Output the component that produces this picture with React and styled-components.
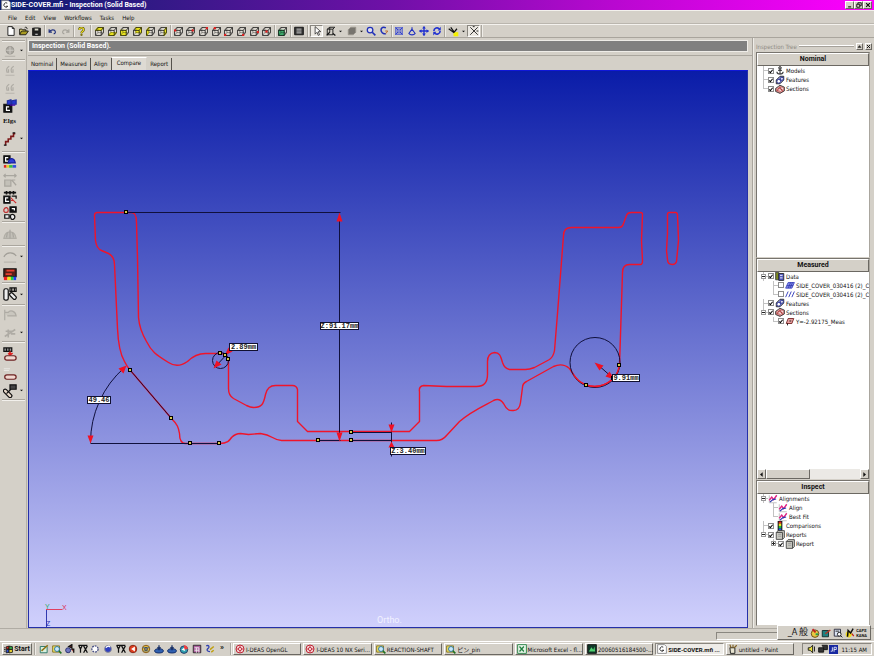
import React from "react";
import styled, { createGlobalStyle, css } from "styled-components";

const face = "#d4d0c8";
const shade = "#8a8780";
const ui = `"DejaVu Sans Condensed", Roboto, "Noto Sans CJK JP", sans-serif`;
const strong = `Roboto, "Liberation Sans", sans-serif`;

const Global = createGlobalStyle`
  *, *::before, *::after { box-sizing: border-box; }
  body { margin: 0; background: ${face}; color: #111; font-family: ${ui}; font-size: 6px; line-height: 9px; }
  button { font: inherit; color: inherit; background: none; border: 0; padding: 0; margin: 0; }
  h1, h2, ul, p { margin: 0; padding: 0; font-size: inherit; list-style: none; }
  svg { display: block; }
`;

const raised = css`
  border: 1px solid;
  border-color: #fff #6b6862 #6b6862 #fff;
`;
const sunken = css`
  border: 1px solid;
  border-color: ${shade} #fff #fff ${shade};
`;

/* ---------- frame ---------- */
const Window = styled.div`
  height: 100vh;
  min-height: 600px;
  display: flex;
  flex-direction: column;
  background: ${face};
`;
const TitleBar = styled.header`
  height: 10px;
  flex: none;
  display: flex;
  align-items: center;
  gap: 0;
  padding: 0 2px 0 1px;
  background: linear-gradient(90deg, #0a1f70, #7010a8 45%, #b808d0 70%, #ff00ff);
  color: #fff;
`;
const Title = styled.h1`
  flex: 1;
  font-family: ${strong};
  font-size: 7px;
  font-weight: 700;
  white-space: nowrap;
`;
const CaptionButton = styled.button`
  ${raised}
  width: 9px;
  height: 8px;
  background: ${face};
  display: grid;
  place-items: center;
`;
const MenuBar = styled.nav`
  flex: none;
  height: 14px;
  display: flex;
  align-items: center;
  gap: 8px;
  padding: 0 8px;
  border-top: 1px solid #f2f0ec;
  border-bottom: 1px solid #bab6ae;
`;
const ToolBar = styled.div`
  flex: none;
  height: 14px;
  display: flex;
  align-items: stretch;
  padding-left: 5px;
  border-top: 1px solid #f4f2ee;
  border-bottom: 1px solid #a9a59d;
`;
const Group = styled.div`
  width: ${(p) => p.$width}px;
  display: flex;
`;
const Tool = styled.button`
  flex: ${(p) => (p.$drop ? "none" : 1)};
  width: ${(p) => (p.$drop ? "21px" : "auto")};
  display: flex;
  align-items: center;
  justify-content: center;
  gap: 3px;
  ${(p) => p.$pressed && css`${sunken} background: #ece9e3;`}
`;
const Sep = styled.span`
  width: 3px;
  padding-left: 1px;
  &::before {
    content: "";
    display: block;
    height: 100%;
    width: 2px;
    border-left: 1px solid #aaa69e;
    border-right: 1px solid #efede8;
  }
`;
const Grip = styled(Sep)`
  width: 5px;
  padding-left: 2px;
`;
const Workspace = styled.div`
  flex: 1;
  min-height: 0;
  display: grid;
  grid-template-columns: 27px minmax(0, 1fr) 122px;
`;

/* ---------- left tools ---------- */
const SideBar = styled.aside`
  display: flex;
  flex-direction: column;
  padding: 2px 1px 0 2px;
  border-right: 1px solid #b4b0a8;
`;
const SideGroup = styled.div`
  border-top: 1px solid #aaa69e;
  box-shadow: inset 0 1px #f2f0ec;
  padding-top: 1px;
`;
const SideTool = styled.button`
  width: 100%;
  height: ${(p) => p.$h || 18}px;
  display: grid;
  grid-template-columns: 15px 1fr;
  align-items: center;
  justify-items: center;
`;

/* ---------- centre ---------- */
const Centre = styled.main`
  display: flex;
  flex-direction: column;
  min-width: 0;
  min-height: 0;
  padding: 2px 0 0 1px;
`;
const TaskHeader = styled.h2`
  flex: none;
  height: 12px;
  background: #808080;
  border: 1px solid #eeece8;
  color: #fff;
  font: 700 7px/10px ${strong};
  padding-left: 3px;
  margin-right: 4px;
`;
const TabStrip = styled.div`
  flex: none;
  height: 15px;
  margin-top: 3px;
  border-top: 1px solid #aaa69e;
  display: flex;
  align-items: flex-end;
`;
const Tab = styled.button`
  height: ${(p) => (p.$on ? 13 : 12)}px;
  padding: 0 3px 1px;
  min-width: 21px;
  white-space: nowrap;
  border-right: 1px solid ${(p) => (p.$on ? face : "#55524d")};
  ${(p) => p.$on && css`border-top: 1px solid #fff; background: #dedad3; padding: 0 5px 3px;`}
`;
const View = styled.section`
  flex: 1;
  min-height: 0;
  margin-right: 4px;
  display: flex;
  border: 1px solid #2530a8;
  border-top-color: #1018d8;
  background: linear-gradient(#0a1ca8, #d0d0fc);
`;
const Drawing = styled.svg`
  flex: 1;
  min-width: 0;
  min-height: 0;
  .cut { fill: none; stroke: #f0142a; stroke-width: 1.4; stroke-linejoin: round; }
  .dim { fill: none; stroke: #10103c; stroke-width: 1; }
  .tip { fill: #f01024; }
  .node { fill: #d8c850; stroke: #000; stroke-width: 1; }
  .plate { fill: #fff; stroke: #101030; stroke-width: 1; }
  .value { font: 700 7px "Liberation Mono", monospace; fill: #222; text-anchor: middle; }
  .axis { font: 7px "Liberation Sans", sans-serif; }
  .mode { font: 9px Roboto, sans-serif; fill: #f2f2ff; }
`;

/* ---------- right panel ---------- */
const Dock = styled.aside`
  border-left: 1px solid #a9a59d;
  box-shadow: inset 1px 0 #efede8;
  padding: 2px 2px 2px 3px;
  display: grid;
  grid-template-rows: 12px 205fr 222fr 145fr;
  min-height: 0;
  min-width: 0;
`;
const DockTitle = styled.div`
  display: flex;
  align-items: center;
  gap: 2px;
  color: #8f8b83;
  white-space: nowrap;
`;
const DockRule = styled.span`
  flex: 1;
  height: 2px;
  border-top: 1px solid #fff;
  border-bottom: 1px solid #a5a19a;
`;
const SmallButton = styled.button`
  ${raised}
  width: 7px;
  height: 7px;
  background: ${face};
  display: grid;
  place-items: center;
`;
const Pane = styled.section`
  min-height: 0;
  min-width: 0;
  display: flex;
  flex-direction: column;
  background: #fff;
  border: 1px solid;
  border-color: #77746e #aaa69e ${face} #77746e;
  margin: 0 2px 0 0;
`;
const PaneTitle = styled.h2`
  flex: none;
  height: 13px;
  font: 700 7px/11px ${strong};
  text-align: center;
  background: ${face};
  ${raised}
`;
const Tree = styled.ul`
  flex: 1;
  min-height: 0;
  overflow: hidden;
  padding-left: 1px;
`;
const Row = styled.li`
  height: 9px;
  display: flex;
  align-items: center;
  white-space: nowrap;
`;
const Branch = styled.span`
  flex: none;
  width: 10px;
  height: 9px;
  margin-left: ${(p) => (p.$child ? 10 : 0)}px;
  display: grid;
  place-items: center;
  background:
    linear-gradient(#c2c2c2, #c2c2c2) 5px 4px / 5px 1px no-repeat,
    linear-gradient(#c2c2c2, #c2c2c2) 5px 0 / 1px ${(p) => (p.$last ? 5 : 9)}px no-repeat;
`;
const Expander = styled.button`
  width: 5px;
  height: 5px;
  border: 1px solid #999;
  background:
    linear-gradient(#222, #222) center / 3px 1px no-repeat,
    linear-gradient(#222, #222) center / 1px ${(p) => (p.$plus ? 3 : 0)}px no-repeat,
    #fff;
`;
const RowLabel = styled.label`
  display: flex;
  align-items: center;
  gap: 1px;
`;
const Check = styled.input`
  appearance: none;
  flex: none;
  width: 6px;
  height: 6px;
  margin: 0;
  border: 1px solid #8c8c8c;
  background: #fff;
  display: grid;
  place-items: center;
  &:checked::before {
    content: "";
    width: 2px;
    height: 4px;
    border: solid #000;
    border-width: 0 1px 1px 0;
    transform: rotate(40deg);
  }
`;
const Scroller = styled.div`
  flex: none;
  height: 10px;
  display: flex;
  background: #ebe9e5;
`;
const ScrollButton = styled.button`
  ${raised}
  background: ${face};
  width: ${(p) => (p.$thumb ? "44px" : "9px")};
  display: grid;
  place-items: center;
`;
const Spacer = styled.span`
  flex: 1;
`;

/* ---------- bottom ---------- */
const StatusBar = styled.div`
  flex: none;
  height: 13px;
  position: relative;
  padding: 3px 6px 1px 0;
  border-top: 1px solid #b0aca4;
  display: flex;
  justify-content: flex-end;
`;
const StatusCell = styled.div`
  ${sunken}
  width: 152px;
`;
const LanguageBar = styled.div`
  position: absolute;
  right: 3px;
  bottom: 1px;
  height: 15px;
  width: 94px;
  padding: 0 3px;
  display: flex;
  align-items: center;
  justify-content: space-between;
  background: ${face};
  font-size: 9px;
  ${raised}
`;
const Caps = styled.span`
  font: 700 4px/5px ${strong};
`;
const TaskBar = styled.footer`
  flex: none;
  height: 15px;
  display: flex;
  align-items: stretch;
  padding: 1px 2px;
  border-top: 1px solid #fff;
`;
const StartButton = styled.button`
  ${raised}
  width: 30px;
  display: flex;
  align-items: center;
  justify-content: center;
  gap: 1px;
  font: 700 7px/9px ${strong};
`;
const Quick = styled.div`
  width: 178px;
  display: flex;
  margin-left: 1px;
`;
const More = styled.button`
  width: 12px;
  font: 700 8px/6px ${strong};
  padding-bottom: 5px;
`;
const Tasks = styled.div`
  flex: 1;
  min-width: 0;
  display: grid;
  grid-template-columns: repeat(8, minmax(0, 1fr));
  gap: 2px;
`;
const Task = styled.button`
  ${(p) => (p.$on ? sunken : raised)}
  background: ${(p) => (p.$on ? "#eeece8" : face)};
  ${(p) => p.$on && css`font: 700 6px/9px ${strong};`}
  display: flex;
  align-items: center;
  gap: 1px;
  padding: 0 1px;
  min-width: 0;
  white-space: nowrap;
  svg { flex: none; }
`;
const Tray = styled.div`
  ${sunken}
  width: 70px;
  margin-left: 8px;
  padding: 0 4px;
  display: flex;
  align-items: center;
  gap: 1px;
  white-space: nowrap;
  svg { flex: none; }
  time { margin-left: auto; }
`;

/* ---------- icons, drawn on a 16 x 16 grid ---------- */
const Svg = ({ size = 10, children }) => (
  <svg width={size} height={size} viewBox="0 0 16 16" fill="none" stroke="#111" strokeWidth="1.4" aria-hidden="true">
    {children}
  </svg>
);
const Down = () => (
  <svg width="3" height="3" viewBox="0 0 4 4" aria-hidden="true"><path d="M0 1h4L2 3z" fill="#111" /></svg>
);

const facePath = {
  top: "M1 6 5 1H15L11 6Z",
  bottom: "M1 15 5 10H15L11 15Z",
  front: "M1 6H11V15H1Z",
  back: "M5 1H15V10H5Z",
  left: "M1 6 5 1V10L1 15Z",
  right: "M11 6 15 1V10L11 15Z",
};
const Cube = ({ side, fill = "#f4ee20", dot }) => (
  <Svg size={9}>
    <path d="M1 6H11V15H1ZM5 1H15V10H5Z" fill="#e4e0d8" stroke="none" />
    {side && <path d={facePath[side]} fill={fill} stroke={fill} strokeWidth="2" />}
    <path d="M1 6H11V15H1ZM1 6 5 1H15V10L11 15M11 6 15 1" strokeWidth="1.4" />
    <path d="M5 1V10H15M1 15 5 10" strokeWidth=".7" />
    {dot && <circle cx={dot[0]} cy={dot[1]} r="2.2" fill="#e02020" stroke="none" />}
  </Svg>
);

const icons = {
  doc: <Svg><path d="M3 1H10L13 4V15H3Z" fill="#fff" /><path d="M10 1V4H13" /></Svg>,
  open: <Svg><path d="M1 13V5H5L6 6H11V8" fill="#f0e060" /><path d="M1 14 4 8H15L11 14Z" fill="#a89a20" /><path d="M9 3C11 1 13 2 13 5" /></Svg>,
  save: <Svg size={9}><path d="M1 2H15V15H1Z" fill="#222" /><path d="M4 2H12V7H4Z" fill="#d8d8c8" /><path d="M5 11H11V15H5Z" fill="#bbb" /></Svg>,
  undo: <Svg size={9}><path d="M2 4V9H7M2 9C5 4 12 4 13 8 14 11 11 12 10 12" stroke="#20307c" strokeWidth="2" /></Svg>,
  redo: <Svg size={9}><path d="M14 4V9H9M14 9C11 4 4 4 3 8 2 11 5 12 6 12" stroke="#a5a29b" strokeWidth="2" /></Svg>,
  help: <Svg size={9}><path d="M4 5C4 0 12 0 12 5 12 8 8 7 8 11" stroke="#555010" strokeWidth="4" /><path d="M4 5C4 0 12 0 12 5 12 8 8 7 8 11" stroke="#f0e020" strokeWidth="2" /><circle cx="8" cy="14" r="1.4" fill="#c8b800" stroke="#555010" /></Svg>,
  film: <Svg><path d="M1 2H15V14H1Z" fill="#333" /><path d="M4 5H12M4 8H12M4 11H12" stroke="#ddd" /></Svg>,
  arrow: <Svg><path d="M5 1V13L8 10 10 15 12 14 10 9H14Z" fill="#fff" strokeWidth="1.1" /></Svg>,
  wire: <Svg><path d="M2 5 6 2H14L11 5V14H2ZM2 5H11M6 2V10" /><path d="M11 12 15 15M1 15 6 10" strokeWidth="2" /></Svg>,
  shaded: <Svg><path d="M2 6 6 2H14V10L10 14H2Z" fill="#77746e" stroke="#99958d" /></Svg>,
  zoom: <Svg><circle cx="6.5" cy="6.5" r="4.5" stroke="#2030b8" strokeWidth="2" fill="#dde" /><path d="M10 10 15 15" stroke="#2030b8" strokeWidth="2.6" /></Svg>,
  refit: <Svg><path d="M11 3C5 0 2 5 4 9 5 12 9 13 11 12" stroke="#2030b8" strokeWidth="2.4" /><path d="M10 8H14L11 12" stroke="#c07030" strokeWidth="1.6" /></Svg>,
  fit: <Svg><path d="M3 3H13V13H3Z" stroke="#3040d0" strokeWidth="1.6" /><path d="M2 2 14 14M14 2 2 14" stroke="#3040d0" strokeWidth="1.6" /><circle cx="8" cy="8" r="2" fill="#fff" stroke="#2030c0" /></Svg>,
  persp: <Svg><path d="M8 2V5M8 5 3 12C5 15 11 15 13 12Z" stroke="#2030c0" strokeWidth="1.8" /></Svg>,
  pan: <Svg><path d="M8 1V15M1 8H15" stroke="#2030d0" strokeWidth="2.2" /><path d="M8 0 11 4H5ZM8 16 5 12H11ZM0 8 4 5V11ZM16 8 12 11V5Z" fill="#2030d0" stroke="none" /></Svg>,
  rotate: <Svg><path d="M3 8A5 5 0 0 1 12 5M13 8A5 5 0 0 1 4 11" stroke="#2030d0" strokeWidth="2.6" /><path d="M14 1V7H9ZM2 15V9H7Z" fill="#2030d0" stroke="none" /></Svg>,
  light: <Svg size={11}><path d="M8 9H15V15H8Z" fill="#f4f000" stroke="none" /><path d="M1 4 9 10M4 2 9 9M13 4 9 9" strokeWidth="1.8" /></Svg>,
  cross: <Svg><path d="M2 2 14 14M14 2 2 14" strokeWidth="1.3" /><path d="M6 1H9M12 8H15" /></Svg>,

  globe: <Svg size={12}><circle cx="8" cy="7" r="5" fill="#aaa7a0" stroke="#99968f" /><path d="M3 7H13M8 2V12" stroke="#ccc9c2" /><path d="M1 15H15" stroke="#b5b1a9" /></Svg>,
  quotes: <Svg size={12}><path d="M7 3C3 5 3 8 4 11H6V7M13 3C9 5 9 8 10 11H12V7" stroke="#aeaba4" strokeWidth="1.6" /><path d="M2 15H14" stroke="#b9b6ae" /></Svg>,
  regis: <Svg size={14}><path d="M1 6H10V15H1Z" fill="#111" /><path d="M7 9H4V13H8" stroke="#fff" /><path d="M5 2 9 1V6H5ZM10 2 15 1V6H10Z" fill="#2838d0" stroke="#2030a0" /><path d="M8 7H14" stroke="#40a" /></Svg>,
  step: <Svg size={14}><path d="M3 15V11H6V8H9V5H12V2H14" stroke="#7c1818" strokeWidth="1.8" /><path d="M1 15H4M11 1H14" /></Svg>,
  compare: <Svg size={14}><path d="M1 1H8V9H1Z" fill="#111" /><path d="M6 3H3V7H7" stroke="#fff" /><path d="M6 9C7 2 13 3 14 9Z" fill="#3040d8" stroke="#1820a0" /><path d="M1 13H4" stroke="#e02020" strokeWidth="3" /><path d="M4 13H7" stroke="#e8d020" strokeWidth="3" /><path d="M7 13H11" stroke="#30c040" strokeWidth="3" /><path d="M11 13H15" stroke="#3050e0" strokeWidth="3" /></Svg>,
  dimOff: <Svg size={14}><path d="M1 3H15M3 1 1 3 3 5M13 1 15 3 13 5" stroke="#a9a69f" /><path d="M2 8H9V15H2ZM10 8 15 14M10 8H14" stroke="#a9a69f" fill="#c3c0b8" /></Svg>,
  dimOn: <Svg size={14}><path d="M1 3H15M4 1V5M8 1V5M12 1V5" strokeWidth="1.8" /><path d="M1 7H8V15H1Z" fill="#111" /><path d="M6 9H3V13H7" stroke="#fff" /><path d="M9 9 15 15M9 12H12" stroke="#d03030" /><path d="M10 7H15V10" /></Svg>,
  table: <Svg size={14}><path d="M8 1H15V7H8Z" fill="#111" /><path d="M10 3H13V5" stroke="#fff" /><path d="M1 4C3 0 6 2 6 5S2 8 1 6Z" stroke="#c03030" /><path d="M2 10H7V14H2ZM9 10C13 8 15 13 12 15S8 12 9 10Z" fill="#eee" /></Svg>,
  fan: <Svg size={14}><path d="M1 13C2 3 14 3 15 13Z" fill="#c2bfb7" stroke="#b1aea6" /><path d="M8 13V3M4 12 5 6M12 12 11 6" stroke="#a9a69f" /></Svg>,
  curve: <Svg size={14}><path d="M1 9C4 3 12 3 15 8" stroke="#a29f98" /><path d="M1 15H15" stroke="#b9b6ae" /></Svg>,
  map: <Svg size={14}><path d="M1 2H15V11H1Z" fill="#5a2018" /><path d="M4 4H13M3 8H10" stroke="#e84030" strokeWidth="2" /><path d="M1 13H5" stroke="#f02020" strokeWidth="4" /><path d="M5 13H9" stroke="#f0e020" strokeWidth="4" /><path d="M9 13H12" stroke="#20d040" strokeWidth="4" /><path d="M12 13H15" stroke="#2040f0" strokeWidth="4" /></Svg>,
  slot: <Svg size={14}><rect x="1" y="2" width="5" height="13" rx="2" fill="#eee" /><path d="M8 1H15V5H8ZM10 1V5M13 1V5" /><rect x="7" y="8" width="9" height="4" rx="2" transform="rotate(45 11 10)" fill="#eee" /></Svg>,
  flagOff: <Svg size={14}><path d="M2 2V14M2 5H6C8 2 14 3 15 9H5" stroke="#aeaba4" fill="#c9c6be" /></Svg>,
  linkOff: <Svg size={14}><path d="M2 12 14 4M6 4V13M3 6H10M9 9H14" stroke="#aeaba4" strokeWidth="1.8" /></Svg>,
  label: <Svg size={14}><path d="M1 1H10V5H1ZM4 1V5M7 1V5" fill="#999" /><path d="M8 5V9M6 7 8 9 11 7" stroke="#e02020" strokeWidth="2" /><rect x="2" y="10" width="13" height="5" rx="2.5" fill="#f0d8d0" stroke="#6c2020" /></Svg>,
  pill: <Svg size={14}><path d="M1 2H8M1 4H7" stroke="#e8e6e2" /><rect x="2" y="9" width="13" height="5" rx="2.5" fill="#f0d8d0" stroke="#6c2020" /></Svg>,
  tag: <Svg size={14}><rect x="0" y="9" width="12" height="4" rx="2" transform="rotate(45 6 10)" fill="#e8d8c8" /><path d="M8 1H15V6H8Z" fill="#444" /><path d="M4 11 9 6" /></Svg>,

  anchor: <Svg><path d="M8 4V14M3 9C3 14 13 14 13 9M5 7H11" stroke="#444" strokeWidth="1.8" /><circle cx="8" cy="3" r="2" fill="#ccc" /></Svg>,
  feature: <Svg><path d="M2 8 8 2H14V8L8 14H2Z" fill="#8890d0" stroke="#222" /><circle cx="6" cy="10" r="3" fill="#fff" stroke="#202890" /><circle cx="11" cy="6" r="2.5" fill="#dde" stroke="#202890" /></Svg>,
  section: <Svg><path d="M1 7 8 2 15 5V11L8 15 1 12Z" fill="#d88888" stroke="#333" /><path d="M4 8 11 11M6 5 13 8" stroke="#fff" /><path d="M3 11 8 5 12 12" stroke="#a02020" /></Svg>,
  data: <Svg><path d="M1 2H6V14H1Z" fill="#7c8820" stroke="#444" /><path d="M6 4H14V15H6Z" fill="#5058c0" stroke="#222" /><path d="M8 7H12M8 11H12" stroke="#fff" /></Svg>,
  mesh: <Svg><path d="M1 13 5 4H15L11 13Z" fill="#8088e8" stroke="#4048c0" /><path d="M3 9H13M5 13 9 4M8 13 12 4" stroke="#2028a0" strokeWidth="1" /></Svg>,
  lines: <Svg><path d="M1 13 5 4M6 13 10 4M11 13 15 4" stroke="#4048c0" strokeWidth="1.6" /></Svg>,
  plane: <Svg><path d="M2 12 5 4H14L11 12Z" fill="#e8a0a0" stroke="#702020" /><path d="M4 12V15M7 8H10" /></Svg>,
  align: <Svg><path d="M2 2V14H14" stroke="#bbb" /><path d="M2 10 6 5 9 9 14 2" stroke="#e02080" strokeWidth="2.2" /><path d="M3 13 8 9 13 8" stroke="#2838b0" strokeWidth="2" /></Svg>,
  bars: <Svg><path d="M5 0H11V16H5Z" fill="#111" /><path d="M8 1V4" stroke="#f02020" strokeWidth="4" /><path d="M8 4V8" stroke="#f0e020" strokeWidth="4" /><path d="M8 8V12" stroke="#20c040" strokeWidth="4" /><path d="M8 12V15" stroke="#2050f0" strokeWidth="4" /></Svg>,
  report: <Svg><path d="M2 4 5 1H15V12L12 15H2Z" fill="#c8c8c0" stroke="#444" /><path d="M2 4H12V15" stroke="#444" /><path d="M5 7H10M5 10H10" stroke="#999" /></Svg>,

  windows: <Svg size={9}><path d="M4 3 9 2V7H4Z" fill="#e03020" stroke="#111" /><path d="M9 2 15 3V8H9Z" fill="#30a040" stroke="#111" /><path d="M4 8H9V13L4 14Z" fill="#3050d0" stroke="#111" /><path d="M9 8H15V13L9 14Z" fill="#e8d030" stroke="#111" /><path d="M0 5H3M0 8H3M0 11H3" /></Svg>,
  sketch: <Svg><path d="M2 4H13V14H2Z" fill="#d8f0e0" stroke="#207060" /><path d="M4 11 14 2" stroke="#907010" strokeWidth="2.4" /></Svg>,
  search: <Svg><path d="M1 3H12V13H1Z" fill="#f0e060" stroke="#807020" /><circle cx="8" cy="8" r="4" fill="#c8e8f8" stroke="#2070a0" /><path d="M11 11 15 15" stroke="#207020" strokeWidth="2.4" /></Svg>,
  shapes: <Svg><circle cx="5" cy="10" r="4" fill="#7078c0" stroke="#222868" /><path d="M6 4 11 1V6ZM10 8H14V14" fill="#b03030" strokeWidth="2" /></Svg>,
  yx: <Svg><path d="M1 2 4 8V14M7 2 4 8M9 3 15 14M15 3 9 14M1 2H15" strokeWidth="2" /></Svg>,
  ring: <Svg><circle cx="8" cy="8" r="5" fill="#fff" stroke="#404880" strokeWidth="2" strokeDasharray="3 1.5" /></Svg>,
  ball: <Svg><circle cx="8" cy="8" r="5.5" fill="#3040c0" stroke="#909090" /><path d="M5 6C6 3 10 3 11 5" stroke="#fff" strokeWidth="2" /></Svg>,
  play: <Svg><circle cx="8" cy="8" r="6" fill="#e04020" stroke="#802010" /><path d="M11 4V12L5 8Z" fill="#fff" stroke="none" /></Svg>,
  disk: <Svg><circle cx="8" cy="8" r="6" fill="#e8c040" stroke="#805010" /><path d="M3 6H13M4 11H12" stroke="#3060a0" /><circle cx="8" cy="8" r="2" fill="#fff" /></Svg>,
  ship: <Svg><ellipse cx="8" cy="11" rx="7" ry="3.4" fill="#3060b0" stroke="#102860" /><path d="M8 2V10M5 6H11" stroke="#102860" strokeWidth="2" /></Svg>,
  pie: <Svg><circle cx="8" cy="9" r="6" fill="#30a0b0" stroke="#203060" /><path d="M8 9V2A6 6 0 0 1 14 8Z" fill="#f04040" stroke="none" /><path d="M4 9 8 6 10 11Z" fill="#fff" stroke="none" /></Svg>,
  calc: <Svg><path d="M2 2H14V14H2Z" fill="#b060a0" stroke="#222" /><path d="M4 6H11V14M7 6V14M4 10H11" stroke="#eee" /></Svg>,
  brush: <Svg><path d="M2 3C6 1 8 5 5 7S3 12 8 12" stroke="#3040b0" strokeWidth="2" /><path d="M8 9 14 4M10 13 14 10" stroke="#c0a010" strokeWidth="2.4" /></Svg>,
  ideas: <Svg><circle cx="8" cy="8" r="6.4" fill="#f6dada" stroke="#c02838" strokeWidth="1.6" /><circle cx="8" cy="8" r="2.6" stroke="#c02838" /><path d="M8 2V6M8 10V14M2 8H6M10 8H14" stroke="#c02838" /></Svg>,
  excel: <Svg><path d="M1 1H15V15H1Z" fill="#e8f4e8" stroke="#208040" /><path d="M4 4 11 12M11 4 4 12" stroke="#208040" strokeWidth="2" /></Svg>,
  picture: <Svg><path d="M1 1H15V15H1Z" fill="#103828" /><path d="M3 12 7 5 10 9 12 4 13 12Z" fill="#50d070" stroke="none" /></Svg>,
  geo: <Svg><path d="M1 1H12L15 4V15H1Z" fill="#fff" stroke="#888" /><path d="M10 5A3.5 3.5 0 1 0 11 10H8" strokeWidth="1.6" stroke="#333" /></Svg>,
  paint: <Svg><path d="M3 6H11V15H4Z" fill="#e8e4d0" /><path d="M5 6 3 1M8 6V1M10 6 14 2" stroke="#806020" strokeWidth="1.8" /></Svg>,
  palette: <Svg><circle cx="8" cy="9" r="6" fill="#e8c840" stroke="#604010" /><path d="M4 2 9 7" stroke="#c02020" strokeWidth="3" /><path d="M9 10H13" stroke="#20a050" strokeWidth="3" /></Svg>,
  book: <Svg><path d="M2 4H12V14H2Z" fill="#208080" stroke="#102828" /><path d="M7 9 15 3" stroke="#c03020" strokeWidth="2" /></Svg>,
  dict: <Svg><path d="M2 2H12V13H2Z" fill="#dce4f4" stroke="#223" /><circle cx="10" cy="10" r="3" fill="#fff" /><path d="M4 5H10M12 12 15 15" /></Svg>,
  pen: <Svg><circle cx="6" cy="10" r="5" fill="#f0d820" stroke="none" /><path d="M4 14 5 4 9 8 13 1" strokeWidth="2.4" /><path d="M11 9 14 13" stroke="#c02020" strokeWidth="2" /></Svg>,
  speaker: <Svg><path d="M2 6H5L9 2V14L5 10H2Z" fill="#e8e040" /><path d="M12 4V12" /></Svg>,
  net: <Svg><path d="M1 6H9V13H1ZM6 2H15V9H9" fill="#333" /></Svg>,
};

const cubesYellow = ["top", "bottom", "front", "back", "left", "right"];
const cubesRed = [[2, 6], [12, 6], [14, 2], [5, 2], [2, 14], [11, 14], [14, 9], [8, 8]];

const Btn = ({ name, label, ...rest }) => <Tool aria-label={label || name} {...rest}>{icons[name]}{rest.$drop && <Down />}</Tool>;

const sideGroups = [
  [["globe", 17, true]],
  [["quotes", 18], ["quotes", 18], ["regis", 18], ["Elgs", 11], ["step", 25, true]],
  [["compare", 18], ["dimOff", 18], ["dimOn", 15], ["table", 17]],
  [["fan", 22]],
  [["curve", 18, true], ["map", 17]],
  [["slot", 20, true]],
  [["flagOff", 18], ["linkOff", 17, true]],
  [["label", 22], ["pill", 17], ["tag", 17, true]],
];
const Elgs = styled.b`
  font: 700 7px "Liberation Serif", serif;
`;

const Item = ({ text, icon, check, child, last, toggle }) => (
  <Row>
    <Branch $child={child} $last={last}>
      {toggle && <Expander $plus={toggle === "+"} aria-label={`Toggle ${text}`} />}
    </Branch>
    <RowLabel as={check === undefined ? "span" : "label"}>
      {check !== undefined && <Check type="checkbox" defaultChecked={check} />}
      {icons[icon]}
      <span>{text}</span>
    </RowLabel>
  </Row>
);

const Value = ({ x, y, w, children }) => (
  <g>
    <rect className="plate" x={x + 0.5} y={y + 0.5} width={w} height="7" />
    <text className="value" x={x + w / 2 + 0.5} y={y + 6}>{children}</text>
  </g>
);
const nodes = [[126, 212], [130, 370], [171, 418], [190, 443], [219, 443], [220, 353], [225, 355], [228, 359], [318, 440], [351, 440], [351, 432], [619, 365], [613, 378], [586, 385]];

const Profile = () => (
  <Drawing viewBox="29 71 718 556" preserveAspectRatio="xMidYMid meet" role="img" aria-label="Section profile with dimensions">
    <g transform="translate(.5 .5)">
      <path className="cut" d="M126 212H97Q94 212 94 215L95 240Q96 248 101 250L108 253Q114 256 114 264L117 328Q118 351 124 361Q127 367 130 370L171 418C177 424 178 427 179 433Q179 443 185 443H219C227 443 229 440 231 437Q235 433 240 433L248 434 260 433Q267 434 272 437 277 440 281 440H436Q442 440 446 435L459 421C470 411 484 405 493 400Q499 397 503 403C507 411 510 410 513 410Q519 410 520 402L522 387Q522 383 526 381L553 366Q562 362 569 368L573 374A25 25 0 0 0 619 365L622 272Q622 264 629 264H640Q642 264 642 260L641 240 642 214Q642 212 640 212H631Q627 212 626 215L623 223Q622 227 618 227H571Q563 227 563 235L557 313 554 350Q553 356 549 359L534 367Q529 369 525 369H509Q504 368 502 362C500 355 499 352 494 352Q487 353 487 361V374Q487 386 476 386H446L423 385Q418 386 419 391V421L409 431H307L297 421V389Q296 385 292 385H275Q267 385 265 394C263 404 261 407 253 407Q250 407 246 405L233 398Q228 395 228 388V359Q227 353 219 353H205C196 353 191 357 187 361Q177 368 168 362C155 354 151 351 146 341Q139 329 138 317L137 257 136 222Q136 212 131 212H126" />
      <path className="cut" d="M669 212H675Q677 212 677 215L678 240 676 261Q675 264 672 264 667 264 667 259L666 250 667 233V214Q667 212 669 212Z" />
      <path className="dim" d="M126 212H340M339 214V438M130 370 171 418M90 443H219M124 367A100 100 0 0 0 90 442M318 440H340M351 440H391M351 432H391M391 422V456M214 367 229 351M597 364 613 378" />
      <circle className="dim" cx="220" cy="360" r="8" />
      <circle className="dim" cx="594.5" cy="362" r="25" />
      <path className="cut" d="M573 374A25 25 0 0 0 619 365" />
      <g className="tip">
        <path d="M339 212 342 221H336ZM339 441 336 432H342ZM90 443 87 435H93ZM126 365 123 373 118 368ZM391 432 388 424H394ZM391 441 394 447H388ZM594 362 603 365 599 370ZM614 379 605 376 609 371ZM224 355 232 351 228 347ZM213 368 221 364 216 360Z" />
      </g>
      {nodes.map(([x, y]) => <rect key={`${x}-${y}`} className="node" x={x - 2} y={y - 2} width="3" height="3" />)}
    </g>
    <Value x={320} y={322} w={38}>Z:91.17mm</Value>
    <Value x={229} y={343} w={28}>2.89mm</Value>
    <Value x={87} y={396} w={23}>49.46</Value>
    <Value x={390} y={447} w={35}>Z:3.40mm</Value>
    <Value x={612} y={374} w={27}>9.91mm</Value>
    <path d="M46 609.5H62" stroke="#e04060" />
    <path d="M46.5 610V627" stroke="#3038b0" />
    <text className="axis" x="45" y="609" fill="#30a868">Y</text>
    <text className="axis" x="62" y="610" fill="#d83058">X</text>
    <text className="axis" x="46" y="626" fill="#2830b0">Z</text>
    <text className="mode" x="377" y="623">Ortho.</text>
  </Drawing>
);

const quick = ["sketch", "search", "shapes", "yx", "ring", "ball", "yx", "play", "disk", "ship", "ship", "pie", "calc", "brush"];
const tasks = [
  ["ideas", "I-DEAS OpenGL"],
  ["ideas", "I-DEAS 10 NX Seri..."],
  ["search", "REACTION-SHAFT"],
  ["search", "ピン_pin"],
  ["excel", "Microsoft Excel - fl..."],
  ["picture", "20060516184500-..."],
  ["geo", "SIDE-COVER.mfi ..."],
  ["paint", "untitled - Paint"],
];

export default function App() {
  return (
    <Window>
      <Global />
      <TitleBar>
        {icons.geo}
        <Title>SIDE-COVER.mfi - Inspection (Solid Based)</Title>
        <CaptionButton aria-label="Minimize"><Svg size={6}><path d="M3 13H11" strokeWidth="3" /></Svg></CaptionButton>
        <CaptionButton aria-label="Restore"><Svg size={6}><path d="M5 6V2H14V10H10M2 6H10V14H2Z" strokeWidth="2.4" /></Svg></CaptionButton>
        <CaptionButton aria-label="Close"><Svg size={6}><path d="M3 3 13 13M13 3 3 13" strokeWidth="3" /></Svg></CaptionButton>
      </TitleBar>
      <MenuBar>
        {["File", "Edit", "View", "Workflows", "Tasks", "Help"].map((m) => <button key={m}>{m}</button>)}
      </MenuBar>
      <ToolBar role="toolbar" aria-label="Standard">
        <Group $width={38}><Btn name="doc" /><Btn name="open" /><Btn name="save" /></Group>
        <Sep />
        <Group $width={26}><Btn name="undo" /><Btn name="redo" /></Group>
        <Sep />
        <Group $width={13}><Btn name="help" /></Group>
        <Grip />
        <Group $width={76}>
          {cubesYellow.map((s) => <Tool key={s} aria-label={`${s} view`}><Cube side={s} /></Tool>)}
        </Group>
        <Sep />
        <Group $width={101}>
          {cubesRed.map((d, i) => <Tool key={i} aria-label={`Corner view ${i + 1}`}><Cube dot={d} /></Tool>)}
        </Group>
        <Sep />
        <Group $width={13}><Tool aria-label="Isometric"><Cube side="front" fill="#40b070" /></Tool></Group>
        <Sep />
        <Group $width={13}><Btn name="film" /></Group>
        <Grip />
        <Group $width={13}><Btn name="arrow" $pressed /></Group>
        <Group $width={42}><Btn name="wire" $drop /><Btn name="shaded" $drop /></Group>
        <Group $width={25}><Btn name="zoom" /><Btn name="refit" /></Group>
        <Sep />
        <Group $width={50}><Btn name="fit" /><Btn name="persp" /><Btn name="pan" /><Btn name="rotate" /></Group>
        <Sep />
        <Group $width={34}><Btn name="light" $drop /><Btn name="cross" $pressed /></Group>
        <Sep />
      </ToolBar>

      <Workspace>
        <SideBar>
          {sideGroups.map((g, i) => (
            <SideGroup key={i}>
              {g.map(([name, h, drop], j) => (
                <SideTool key={j} $h={h} aria-label={name}>
                  {icons[name] || <Elgs>{name}</Elgs>}
                  {drop && <Down />}
                </SideTool>
              ))}
            </SideGroup>
          ))}
          <SideGroup />
        </SideBar>

        <Centre>
          <TaskHeader>Inspection (Solid Based).</TaskHeader>
          <TabStrip role="tablist">
            {["Nominal", "Measured", "Align", "Compare", "Report"].map((t) => (
              <Tab key={t} role="tab" aria-selected={t === "Compare"} $on={t === "Compare"}>{t}</Tab>
            ))}
          </TabStrip>
          <View><Profile /></View>
        </Centre>

        <Dock>
          <DockTitle>
            Inspection Tree <DockRule />
            <SmallButton aria-label="Collapse"><Svg size={5}><path d="M3 11 8 5 13 11Z" fill="#333" /></Svg></SmallButton>
            <SmallButton aria-label="Close tree"><Svg size={5}><path d="M3 3 13 13M13 3 3 13" strokeWidth="3" /></Svg></SmallButton>
          </DockTitle>
          <Pane>
            <PaneTitle>Nominal</PaneTitle>
            <Tree>
              <Item text="Models" icon="anchor" check />
              <Item text="Features" icon="feature" check />
              <Item text="Sections" icon="section" check last />
            </Tree>
          </Pane>
          <Pane>
            <PaneTitle>Measured</PaneTitle>
            <Tree>
              <Item text="Data" icon="data" check toggle="-" />
              <Item text="SIDE_COVER_030416 (2)_C" icon="mesh" check={false} child />
              <Item text="SIDE_COVER_030416 (2)_C" icon="lines" check={false} child last />
              <Item text="Features" icon="feature" check />
              <Item text="Sections" icon="section" check toggle="-" last />
              <Item text="Y=-2.92175_Meas" icon="plane" check child last />
            </Tree>
            <Scroller>
              <ScrollButton aria-label="Scroll left"><Svg size={5}><path d="M11 2 4 8 11 14Z" fill="#111" /></Svg></ScrollButton>
              <ScrollButton $thumb aria-label="Scroll thumb" />
              <Spacer />
              <ScrollButton aria-label="Scroll right"><Svg size={5}><path d="M5 2 12 8 5 14Z" fill="#111" /></Svg></ScrollButton>
            </Scroller>
          </Pane>
          <Pane>
            <PaneTitle>Inspect</PaneTitle>
            <Tree>
              <Item text="Alignments" icon="align" toggle="-" />
              <Item text="Align" icon="align" child />
              <Item text="Best Fit" icon="align" child last />
              <Item text="Comparisons" icon="bars" check />
              <Item text="Reports" icon="report" check toggle="-" last />
              <Item text="Report" icon="report" check child toggle="+" last />
            </Tree>
          </Pane>
        </Dock>
      </Workspace>

      <StatusBar>
        <StatusCell />
        <LanguageBar>
          <Grip />
          <span>_A</span>
          <span>般</span>
          {icons.palette}{icons.book}{icons.dict}{icons.pen}
          <Caps>CAPS<br />KANA</Caps>
        </LanguageBar>
      </StatusBar>
      <TaskBar>
        <StartButton>{icons.windows}Start</StartButton>
        <Grip />
        <Quick>{quick.map((q, i) => <Btn key={i} name={q} />)}</Quick>
        <More aria-label="More">»</More>
        <Grip />
        <Tasks>
          {tasks.map(([icon, text]) => (
            <Task key={text} $on={icon === "geo"}>{icons[icon]}<span>{text}</span></Task>
          ))}
        </Tasks>
        <Tray>
          {icons.speaker}{icons.net}
          <Svg size={9}><path d="M0 0H16V16H0Z" fill="#1828a0" stroke="none" /><path d="M6 4V11H3M9 12V4H13V8H9" stroke="#fff" /></Svg>
          <time>11:15 AM</time>
        </Tray>
      </TaskBar>
    </Window>
  );
}
